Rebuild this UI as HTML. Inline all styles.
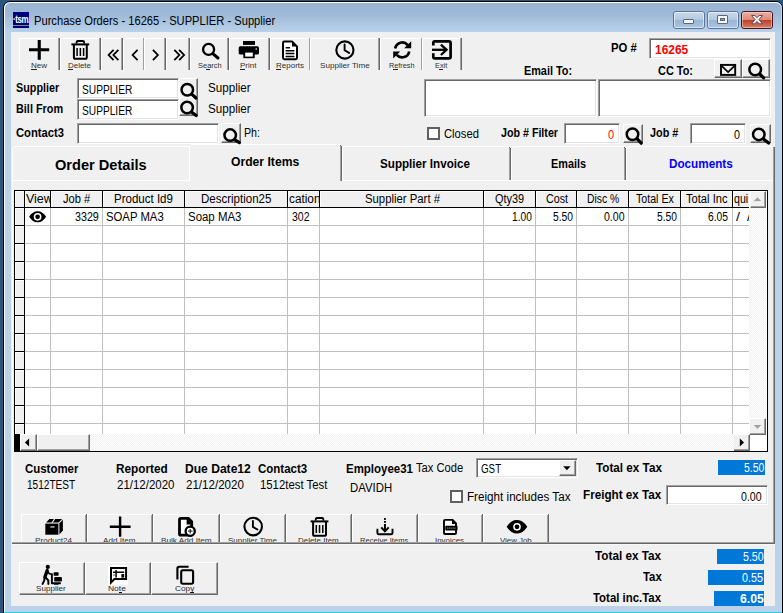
<!DOCTYPE html>
<html>
<head>
<meta charset="utf-8">
<title>Purchase Orders</title>
<style>
*{box-sizing:border-box;margin:0;padding:0}
html,body{width:783px;height:613px;overflow:hidden}
body{background:#2a567d;font-family:"Liberation Sans",sans-serif;font-size:13px;color:#000;position:relative}
.abs,.t,.in,.btn{position:absolute}
.t{white-space:nowrap;line-height:1;color:#000}
#win{position:absolute;left:3px;top:1px;width:780px;height:620px;border:1px solid #000;border-radius:7px 7px 0 0;background:#bad2ea;overflow:hidden}
#win .hl{position:absolute;left:0;top:0;right:0;bottom:0;border:1px solid #fff;border-radius:6px 6px 0 0;border-right-color:#9fe6fb}
#titlegrad{position:absolute;left:1px;top:1px;right:1px;height:30px;background:linear-gradient(#98b3d3 0%,#9fb9d8 40%,#b4cde7 85%,#bad2ea 100%);border-radius:5px 5px 0 0}
#client{position:absolute;left:11px;top:32px;width:764px;height:574px;background:#f0f0f0}
#botcyan{position:absolute;left:4px;top:612px;width:778px;height:1px;background:#22d0e6}
.in{background:#fff;border:1px solid;border-color:#a0a0a0 #fff #fff #a0a0a0;box-shadow:inset 1px 1px 0 #696969,inset -1px -1px 0 #e3e3e3}
.btn{background:#f0f0f0;border:1px solid;border-color:#fff #696969 #696969 #fff;box-shadow:inset -1px -1px 0 #a0a0a0}
.wb{border:1px solid #5a7597;border-radius:3px;background:linear-gradient(#c9d9eb 0%,#b3c8df 48%,#9ab5d4 52%,#a9c5e2 100%)}
.wb i{position:absolute;left:0;top:0;right:0;bottom:0;border:1px solid rgba(255,255,255,.55);border-radius:2px}
.wc{border-color:#47161f;background:linear-gradient(#e9b0a3 0%,#dc8b79 48%,#bf4024 52%,#d4806b 100%)}
.wc i{border-color:rgba(255,220,210,.5)}
.clip{position:absolute;overflow:hidden}
.lbl{color:#5a5a5a}

</style>
</head>
<body>
<div id="win"><div id="titlegrad"></div><div class="hl"></div></div>
<div id="botcyan"></div>
<div id="client"></div>
<div class="abs" id="appicon" style="left:13px;top:12px;width:16px;height:16px;background:#00007b;overflow:hidden">
<span class="t" style="left:-0.5px;top:2px;font-size:10px;font-weight:bold;color:#fff;letter-spacing:-0.5px;transform:scale(0.8,1.15);transform-origin:0 0">&#183;tsm.</span>
<div class="abs" style="left:0;top:13px;width:16px;height:1px;background:#8c8678"></div>
</div>
<span class="t" id="ttl" style="left:33.80px;top:15.00px;font-size:12px;transform:scaleX(0.9296);transform-origin:0 0;">Purchase Orders - 16265 - SUPPLIER - Supplier</span>
<div class="abs wb" style="left:673px;top:11px;width:32px;height:18px"><i></i><div class="abs" style="left:9px;top:7px;width:11px;height:5px;background:#f4f6f9;border:1px solid #5b6676;border-radius:1px"></div></div>
<div class="abs wb" style="left:707px;top:11px;width:32px;height:18px"><i></i><div class="abs" style="left:9px;top:3px;width:11px;height:9px;background:#f4f6f9;border:1px solid #5b6676;border-radius:1px"><div class="abs" style="left:2px;top:2px;width:5px;height:3px;background:#7f9cc2;border:1px solid #5b6676"></div></div></div>
<div class="abs wb wc" style="left:741px;top:11px;width:32px;height:18px"><i></i>
<svg class="abs" style="left:7.7px;top:1.8px" width="14" height="12" viewBox="0 0 14 12"><path d="M1.5 1.5h3.4L7 3.7 9.1 1.5H12.5L8.9 5.6 12.5 9.8H9.1L7 7.5 4.9 9.8H1.5L5.1 5.6Z" fill="#f6f2f1" stroke="#5d4a52" stroke-width="1" stroke-linejoin="round"/></svg></div>
<div class="abs" style="left:19px;top:38px;width:1px;height:32px;background:#fff;"></div>
<div class="abs" style="left:19px;top:38px;width:41px;height:1px;background:#fff;"></div>
<div class="abs" style="left:58px;top:38px;width:1px;height:32px;background:#a0a0a0;"></div>
<div class="abs" style="left:59px;top:38px;width:1px;height:32px;background:#696969;"></div>
<div class="abs" style="left:60px;top:38px;width:1px;height:32px;background:#fff;"></div>
<div class="abs" style="left:60px;top:38px;width:41px;height:1px;background:#fff;"></div>
<div class="abs" style="left:99px;top:38px;width:1px;height:32px;background:#a0a0a0;"></div>
<div class="abs" style="left:100px;top:38px;width:1px;height:32px;background:#696969;"></div>
<div class="abs" style="left:101px;top:38px;width:1px;height:32px;background:#fff;"></div>
<div class="abs" style="left:101px;top:38px;width:22px;height:1px;background:#fff;"></div>
<div class="abs" style="left:121px;top:38px;width:1px;height:32px;background:#a0a0a0;"></div>
<div class="abs" style="left:122px;top:38px;width:1px;height:32px;background:#696969;"></div>
<div class="abs" style="left:123px;top:38px;width:1px;height:32px;background:#fff;"></div>
<div class="abs" style="left:123px;top:38px;width:21px;height:1px;background:#fff;"></div>
<div class="abs" style="left:143px;top:38px;width:1px;height:32px;background:#a0a0a0;"></div>
<div class="abs" style="left:144px;top:38px;width:1px;height:32px;background:#fff;"></div>
<div class="abs" style="left:144px;top:38px;width:22px;height:1px;background:#fff;"></div>
<div class="abs" style="left:164px;top:38px;width:1px;height:32px;background:#a0a0a0;"></div>
<div class="abs" style="left:165px;top:38px;width:1px;height:32px;background:#696969;"></div>
<div class="abs" style="left:166px;top:38px;width:1px;height:32px;background:#fff;"></div>
<div class="abs" style="left:166px;top:38px;width:24px;height:1px;background:#fff;"></div>
<div class="abs" style="left:188px;top:38px;width:1px;height:32px;background:#a0a0a0;"></div>
<div class="abs" style="left:189px;top:38px;width:1px;height:32px;background:#696969;"></div>
<div class="abs" style="left:190px;top:38px;width:1px;height:32px;background:#fff;"></div>
<div class="abs" style="left:190px;top:38px;width:39px;height:1px;background:#fff;"></div>
<div class="abs" style="left:227px;top:38px;width:1px;height:32px;background:#a0a0a0;"></div>
<div class="abs" style="left:228px;top:38px;width:1px;height:32px;background:#696969;"></div>
<div class="abs" style="left:229px;top:38px;width:1px;height:32px;background:#fff;"></div>
<div class="abs" style="left:229px;top:38px;width:41px;height:1px;background:#fff;"></div>
<div class="abs" style="left:268px;top:38px;width:1px;height:32px;background:#a0a0a0;"></div>
<div class="abs" style="left:269px;top:38px;width:1px;height:32px;background:#696969;"></div>
<div class="abs" style="left:270px;top:38px;width:1px;height:32px;background:#fff;"></div>
<div class="abs" style="left:270px;top:38px;width:40px;height:1px;background:#fff;"></div>
<div class="abs" style="left:309px;top:38px;width:1px;height:32px;background:#a0a0a0;"></div>
<div class="abs" style="left:310px;top:38px;width:1px;height:32px;background:#fff;"></div>
<div class="abs" style="left:310px;top:38px;width:70px;height:1px;background:#fff;"></div>
<div class="abs" style="left:378px;top:38px;width:1px;height:32px;background:#a0a0a0;"></div>
<div class="abs" style="left:379px;top:38px;width:1px;height:32px;background:#696969;"></div>
<div class="abs" style="left:380px;top:38px;width:1px;height:32px;background:#fff;"></div>
<div class="abs" style="left:380px;top:38px;width:42px;height:1px;background:#fff;"></div>
<div class="abs" style="left:421px;top:38px;width:1px;height:32px;background:#a0a0a0;"></div>
<div class="abs" style="left:422px;top:38px;width:1px;height:32px;background:#fff;"></div>
<div class="abs" style="left:422px;top:38px;width:40px;height:1px;background:#fff;"></div>
<div class="abs" style="left:460px;top:38px;width:1px;height:32px;background:#a0a0a0;"></div>
<div class="abs" style="left:461px;top:38px;width:1px;height:32px;background:#696969;"></div>
<span class="t" id="lNew" style="left:31.00px;top:62.00px;font-size:8px;color:#303030;transform:scaleX(1.0053);transform-origin:0 0;">New</span>
<div class="abs" style="left:31px;top:69px;width:5.600000000000001px;height:1px;background:#222;"></div>
<span class="t" id="lDel" style="left:68.00px;top:62.00px;font-size:8px;color:#303030;transform:scaleX(0.9946);transform-origin:0 0;">Delete</span>
<div class="abs" style="left:68px;top:69px;width:5.400000000000006px;height:1px;background:#222;"></div>
<span class="t" id="lSea" style="left:197.70px;top:62.00px;font-size:8px;color:#303030;transform:scaleX(0.9346);transform-origin:0 0;">Search</span>
<div class="abs" style="left:206px;top:69px;width:4.400000000000006px;height:1px;background:#222;"></div>
<span class="t" id="lPri" style="left:240.30px;top:62.00px;font-size:8px;color:#303030;transform:scaleX(0.9968);transform-origin:0 0;">Print</span>
<div class="abs" style="left:240.3px;top:69px;width:4.299999999999983px;height:1px;background:#222;"></div>
<span class="t" id="lRep" style="left:276.10px;top:62.00px;font-size:8px;color:#303030;transform:scaleX(1.0030);transform-origin:0 0;">Reports</span>
<div class="abs" style="left:276.1px;top:69px;width:4.699999999999989px;height:1px;background:#222;"></div>
<span class="t" id="lSTi" style="left:319.70px;top:62.00px;font-size:8px;color:#303030;transform:scaleX(1.0159);transform-origin:0 0;">Supplier Time</span>
<span class="t" id="lRef" style="left:388.60px;top:62.00px;font-size:8px;color:#303030;transform:scaleX(0.9102);transform-origin:0 0;">Refresh</span>
<div class="abs" style="left:393.2px;top:69px;width:4.400000000000034px;height:1px;background:#222;"></div>
<span class="t" id="lExi" style="left:435.00px;top:62.00px;font-size:8px;color:#303030;transform:scaleX(0.9143);transform-origin:0 0;">Exit</span>
<div class="abs" style="left:439.3px;top:69px;width:3.8999999999999773px;height:1px;background:#222;"></div>
<span class="t" id="fSup" style="left:15.80px;top:82.00px;font-size:12px;font-weight:bold;transform:scaleX(0.8997);transform-origin:0 0;">Supplier</span>
<span class="t" id="fBil" style="left:15.80px;top:103.00px;font-size:12px;font-weight:bold;transform:scaleX(0.9055);transform-origin:0 0;">Bill From</span>
<span class="t" id="fCon" style="left:16.00px;top:127.00px;font-size:12px;font-weight:bold;transform:scaleX(0.9349);transform-origin:0 0;">Contact3</span>
<div class="in" style="left:77px;top:78px;width:102px;height:21px;"></div>
<div class="in" style="left:77px;top:99px;width:102px;height:21px;"></div>
<div class="in" style="left:77px;top:123px;width:142px;height:21px;"></div>
<span class="t" id="fSv1" style="left:82.00px;top:84.00px;font-size:12px;transform:scaleX(0.8474);transform-origin:0 0;">SUPPLIER</span>
<span class="t" id="fSv2" style="left:82.00px;top:105.00px;font-size:12px;transform:scaleX(0.8474);transform-origin:0 0;">SUPPLIER</span>
<div class="btn" style="left:179px;top:78px;width:19px;height:23px;"></div>
<div class="btn" style="left:179px;top:97px;width:19px;height:19px;"></div>
<div class="btn" style="left:221px;top:123px;width:20px;height:20px;"></div>
<span class="t" id="fSn1" style="left:207.50px;top:82.00px;font-size:12px;transform:scaleX(0.9698);transform-origin:0 0;">Supplier</span>
<span class="t" id="fSn2" style="left:207.50px;top:103.00px;font-size:12px;transform:scaleX(0.9698);transform-origin:0 0;">Supplier</span>
<span class="t" id="fPh" style="left:244.30px;top:127.00px;font-size:12px;transform:scaleX(0.8881);transform-origin:0 0;">Ph:</span>
<span class="t" id="fPO" style="left:611.20px;top:42.00px;font-size:12px;font-weight:bold;transform:scaleX(0.9430);transform-origin:0 0;">PO #</span>
<div class="in" style="left:649px;top:38px;width:122px;height:21px;"></div>
<span class="t" id="fPOv" style="left:654.90px;top:44.00px;font-size:12px;font-weight:bold;color:#f00;transform:scaleX(0.9948);transform-origin:0 0;">16265</span>
<span class="t" id="fEm" style="left:524.00px;top:65.00px;font-size:12px;font-weight:bold;transform:scaleX(0.9035);transform-origin:0 0;">Email To:</span>
<span class="t" id="fCC" style="left:658.00px;top:65.00px;font-size:12px;font-weight:bold;transform:scaleX(0.9106);transform-origin:0 0;">CC To:</span>
<div class="btn" style="left:714px;top:59px;width:28px;height:19px;"></div>
<div class="btn" style="left:742px;top:59px;width:28px;height:19px;"></div>
<div class="in" style="left:424px;top:79px;width:173px;height:38px;"></div>
<div class="in" style="left:598px;top:79px;width:173px;height:38px;"></div>
<div class="abs" style="left:427px;top:127px;width:13px;height:13px;background:#fff;border:2px solid #606060"></div>
<span class="t" id="fClo" style="left:444.00px;top:128.00px;font-size:12px;transform:scaleX(0.9368);transform-origin:0 0;">Closed</span>
<span class="t" id="fJF" style="left:501.00px;top:127.00px;font-size:12px;font-weight:bold;transform:scaleX(0.8904);transform-origin:0 0;">Job # Filter</span>
<div class="in" style="left:564px;top:123px;width:56px;height:21px;"></div>
<span class="t" id="fJFv" style="left:608.00px;top:129.00px;font-size:12px;color:#f00;transform:scaleX(0.9271);transform-origin:0 0;">0</span>
<div class="btn" style="left:623px;top:124px;width:20px;height:19px;"></div>
<span class="t" id="fJn" style="left:649.70px;top:127.00px;font-size:12px;font-weight:bold;transform:scaleX(0.9029);transform-origin:0 0;">Job #</span>
<div class="in" style="left:690px;top:123px;width:56px;height:21px;"></div>
<span class="t" id="fJnv" style="left:734.00px;top:129.00px;font-size:12px;transform:scaleX(0.8972);transform-origin:0 0;">0</span>
<div class="btn" style="left:750px;top:124px;width:21px;height:19px;"></div>
<div class="abs" style="left:12px;top:181px;width:1px;height:361px;background:#fff;"></div>
<div class="abs" style="left:12px;top:542px;width:763px;height:1px;background:#a0a0a0;"></div>
<div class="abs" style="left:12px;top:543px;width:763px;height:1px;background:#696969;"></div>
<div class="abs" style="left:12px;top:544px;width:763px;height:1px;background:#f8f8f8;"></div>
<div class="abs" style="left:773px;top:147px;width:1px;height:396px;background:#a0a0a0;"></div>
<div class="abs" style="left:774px;top:147px;width:1px;height:397px;background:#696969;"></div>
<div class="abs" style="left:12px;top:180px;width:178px;height:1px;background:#fff;"></div>
<div class="abs" style="left:342px;top:180px;width:431px;height:1px;background:#fff;"></div>
<div class="abs" style="left:12px;top:148px;width:1px;height:32px;background:#fff;"></div>
<div class="abs" style="left:13px;top:147px;width:1px;height:1px;background:#fff;"></div>
<div class="abs" style="left:14px;top:146px;width:175px;height:1px;background:#fff;"></div>
<div class="abs" style="left:189px;top:146px;width:1px;height:35px;background:#fff;"></div>
<div class="abs" style="left:190px;top:145px;width:1px;height:1px;background:#fff;"></div>
<div class="abs" style="left:191px;top:144px;width:149px;height:1px;background:#fff;"></div>
<div class="abs" style="left:340px;top:146px;width:1px;height:35px;background:#a0a0a0;"></div>
<div class="abs" style="left:341px;top:146px;width:1px;height:35px;background:#696969;"></div>
<div class="abs" style="left:340px;top:145px;width:1px;height:1px;background:#696969;"></div>
<div class="abs" style="left:342px;top:148px;width:1px;height:32px;background:#fff;"></div>
<div class="abs" style="left:343px;top:147px;width:1px;height:1px;background:#fff;"></div>
<div class="abs" style="left:344px;top:146px;width:165px;height:1px;background:#fff;"></div>
<div class="abs" style="left:509px;top:148px;width:1px;height:32px;background:#a0a0a0;"></div>
<div class="abs" style="left:510px;top:148px;width:1px;height:32px;background:#696969;"></div>
<div class="abs" style="left:509px;top:147px;width:1px;height:1px;background:#696969;"></div>
<div class="abs" style="left:511px;top:148px;width:1px;height:32px;background:#fff;"></div>
<div class="abs" style="left:512px;top:147px;width:1px;height:1px;background:#fff;"></div>
<div class="abs" style="left:513px;top:146px;width:111px;height:1px;background:#fff;"></div>
<div class="abs" style="left:624px;top:148px;width:1px;height:32px;background:#a0a0a0;"></div>
<div class="abs" style="left:625px;top:148px;width:1px;height:32px;background:#696969;"></div>
<div class="abs" style="left:624px;top:147px;width:1px;height:1px;background:#696969;"></div>
<div class="abs" style="left:626px;top:148px;width:1px;height:32px;background:#fff;"></div>
<div class="abs" style="left:627px;top:147px;width:1px;height:1px;background:#fff;"></div>
<div class="abs" style="left:628px;top:146px;width:145px;height:1px;background:#fff;"></div>
<span class="t" id="tbOD" style="left:55.30px;top:157.00px;font-size:15px;font-weight:bold;transform:scaleX(0.9733);transform-origin:0 0;">Order Details</span>
<span class="t" id="tbOI" style="left:231.00px;top:156.00px;font-size:12.5px;font-weight:bold;transform:scaleX(0.9719);transform-origin:0 0;">Order Items</span>
<span class="t" id="tbSI" style="left:380.00px;top:158.00px;font-size:12.5px;font-weight:bold;transform:scaleX(0.9320);transform-origin:0 0;">Supplier Invoice</span>
<span class="t" id="tbEm" style="left:551.00px;top:158.00px;font-size:12.5px;font-weight:bold;transform:scaleX(0.8682);transform-origin:0 0;">Emails</span>
<span class="t" id="tbDo" style="left:668.50px;top:158.00px;font-size:12.5px;font-weight:bold;color:#0000ff;transform:scaleX(0.9357);transform-origin:0 0;">Documents</span>
<div class="abs" style="left:14px;top:190px;width:754px;height:262px;background:#fff;"></div>
<div class="abs" style="left:15px;top:191px;width:734px;height:16px;background:#f0f0f0;"></div>
<div class="abs" style="left:15px;top:208px;width:9px;height:226px;background:#f0f0f0;"></div>
<div class="abs" style="left:14px;top:190px;width:754px;height:1px;background:#000;"></div>
<div class="abs" style="left:14px;top:451px;width:754px;height:1px;background:#000;"></div>
<div class="abs" style="left:14px;top:190px;width:1px;height:262px;background:#000;"></div>
<div class="abs" style="left:767px;top:190px;width:1px;height:262px;background:#000;"></div>
<div class="abs" style="left:15px;top:207px;width:734px;height:1px;background:#000;"></div>
<div class="abs" style="left:24px;top:191px;width:1px;height:16px;background:#000;"></div>
<div class="abs" style="left:50px;top:191px;width:1px;height:16px;background:#000;"></div>
<div class="abs" style="left:50px;top:208px;width:1px;height:226px;background:#c0c0c0;"></div>
<div class="abs" style="left:102px;top:191px;width:1px;height:16px;background:#000;"></div>
<div class="abs" style="left:102px;top:208px;width:1px;height:226px;background:#c0c0c0;"></div>
<div class="abs" style="left:184px;top:191px;width:1px;height:16px;background:#000;"></div>
<div class="abs" style="left:184px;top:208px;width:1px;height:226px;background:#c0c0c0;"></div>
<div class="abs" style="left:287px;top:191px;width:1px;height:16px;background:#000;"></div>
<div class="abs" style="left:287px;top:208px;width:1px;height:226px;background:#c0c0c0;"></div>
<div class="abs" style="left:319px;top:191px;width:1px;height:16px;background:#000;"></div>
<div class="abs" style="left:319px;top:208px;width:1px;height:226px;background:#c0c0c0;"></div>
<div class="abs" style="left:483px;top:191px;width:1px;height:16px;background:#000;"></div>
<div class="abs" style="left:483px;top:208px;width:1px;height:226px;background:#c0c0c0;"></div>
<div class="abs" style="left:535px;top:191px;width:1px;height:16px;background:#000;"></div>
<div class="abs" style="left:535px;top:208px;width:1px;height:226px;background:#c0c0c0;"></div>
<div class="abs" style="left:576px;top:191px;width:1px;height:16px;background:#000;"></div>
<div class="abs" style="left:576px;top:208px;width:1px;height:226px;background:#c0c0c0;"></div>
<div class="abs" style="left:628px;top:191px;width:1px;height:16px;background:#000;"></div>
<div class="abs" style="left:628px;top:208px;width:1px;height:226px;background:#c0c0c0;"></div>
<div class="abs" style="left:680px;top:191px;width:1px;height:16px;background:#000;"></div>
<div class="abs" style="left:680px;top:208px;width:1px;height:226px;background:#c0c0c0;"></div>
<div class="abs" style="left:732px;top:191px;width:1px;height:16px;background:#000;"></div>
<div class="abs" style="left:732px;top:208px;width:1px;height:226px;background:#c0c0c0;"></div>
<div class="abs" style="left:24px;top:208px;width:1px;height:226px;background:#000;"></div>
<div class="abs" style="left:15px;top:191px;width:9px;height:1px;background:#fff;"></div>
<div class="abs" style="left:15px;top:191px;width:1px;height:16px;background:#fff;"></div>
<div class="abs" style="left:25px;top:191px;width:25px;height:1px;background:#fff;"></div>
<div class="abs" style="left:25px;top:191px;width:1px;height:16px;background:#fff;"></div>
<div class="abs" style="left:51px;top:191px;width:51px;height:1px;background:#fff;"></div>
<div class="abs" style="left:51px;top:191px;width:1px;height:16px;background:#fff;"></div>
<div class="abs" style="left:103px;top:191px;width:81px;height:1px;background:#fff;"></div>
<div class="abs" style="left:103px;top:191px;width:1px;height:16px;background:#fff;"></div>
<div class="abs" style="left:185px;top:191px;width:102px;height:1px;background:#fff;"></div>
<div class="abs" style="left:185px;top:191px;width:1px;height:16px;background:#fff;"></div>
<div class="abs" style="left:288px;top:191px;width:31px;height:1px;background:#fff;"></div>
<div class="abs" style="left:288px;top:191px;width:1px;height:16px;background:#fff;"></div>
<div class="abs" style="left:320px;top:191px;width:163px;height:1px;background:#fff;"></div>
<div class="abs" style="left:320px;top:191px;width:1px;height:16px;background:#fff;"></div>
<div class="abs" style="left:484px;top:191px;width:51px;height:1px;background:#fff;"></div>
<div class="abs" style="left:484px;top:191px;width:1px;height:16px;background:#fff;"></div>
<div class="abs" style="left:536px;top:191px;width:40px;height:1px;background:#fff;"></div>
<div class="abs" style="left:536px;top:191px;width:1px;height:16px;background:#fff;"></div>
<div class="abs" style="left:577px;top:191px;width:51px;height:1px;background:#fff;"></div>
<div class="abs" style="left:577px;top:191px;width:1px;height:16px;background:#fff;"></div>
<div class="abs" style="left:629px;top:191px;width:51px;height:1px;background:#fff;"></div>
<div class="abs" style="left:629px;top:191px;width:1px;height:16px;background:#fff;"></div>
<div class="abs" style="left:681px;top:191px;width:51px;height:1px;background:#fff;"></div>
<div class="abs" style="left:681px;top:191px;width:1px;height:16px;background:#fff;"></div>
<div class="abs" style="left:733px;top:191px;width:16px;height:1px;background:#fff;"></div>
<div class="abs" style="left:733px;top:191px;width:1px;height:16px;background:#fff;"></div>
<div class="abs" style="left:25px;top:225px;width:724px;height:1px;background:#c0c0c0;"></div>
<div class="abs" style="left:15px;top:225px;width:9px;height:1px;background:#000;"></div>
<div class="abs" style="left:25px;top:243px;width:724px;height:1px;background:#c0c0c0;"></div>
<div class="abs" style="left:15px;top:243px;width:9px;height:1px;background:#000;"></div>
<div class="abs" style="left:25px;top:261px;width:724px;height:1px;background:#c0c0c0;"></div>
<div class="abs" style="left:15px;top:261px;width:9px;height:1px;background:#000;"></div>
<div class="abs" style="left:25px;top:279px;width:724px;height:1px;background:#c0c0c0;"></div>
<div class="abs" style="left:15px;top:279px;width:9px;height:1px;background:#000;"></div>
<div class="abs" style="left:25px;top:297px;width:724px;height:1px;background:#c0c0c0;"></div>
<div class="abs" style="left:15px;top:297px;width:9px;height:1px;background:#000;"></div>
<div class="abs" style="left:25px;top:315px;width:724px;height:1px;background:#c0c0c0;"></div>
<div class="abs" style="left:15px;top:315px;width:9px;height:1px;background:#000;"></div>
<div class="abs" style="left:25px;top:333px;width:724px;height:1px;background:#c0c0c0;"></div>
<div class="abs" style="left:15px;top:333px;width:9px;height:1px;background:#000;"></div>
<div class="abs" style="left:25px;top:351px;width:724px;height:1px;background:#c0c0c0;"></div>
<div class="abs" style="left:15px;top:351px;width:9px;height:1px;background:#000;"></div>
<div class="abs" style="left:25px;top:369px;width:724px;height:1px;background:#c0c0c0;"></div>
<div class="abs" style="left:15px;top:369px;width:9px;height:1px;background:#000;"></div>
<div class="abs" style="left:25px;top:387px;width:724px;height:1px;background:#c0c0c0;"></div>
<div class="abs" style="left:15px;top:387px;width:9px;height:1px;background:#000;"></div>
<div class="abs" style="left:25px;top:405px;width:724px;height:1px;background:#c0c0c0;"></div>
<div class="abs" style="left:15px;top:405px;width:9px;height:1px;background:#000;"></div>
<div class="abs" style="left:25px;top:423px;width:724px;height:1px;background:#c0c0c0;"></div>
<div class="abs" style="left:15px;top:423px;width:9px;height:1px;background:#000;"></div>
<div class="abs" style="left:15px;top:208px;width:9px;height:1px;background:#fff;"></div>
<div class="abs" style="left:15px;top:208px;width:1px;height:17px;background:#fff;"></div>
<div class="abs" style="left:15px;top:226px;width:9px;height:1px;background:#fff;"></div>
<div class="abs" style="left:15px;top:226px;width:1px;height:17px;background:#fff;"></div>
<div class="abs" style="left:15px;top:244px;width:9px;height:1px;background:#fff;"></div>
<div class="abs" style="left:15px;top:244px;width:1px;height:17px;background:#fff;"></div>
<div class="abs" style="left:15px;top:262px;width:9px;height:1px;background:#fff;"></div>
<div class="abs" style="left:15px;top:262px;width:1px;height:17px;background:#fff;"></div>
<div class="abs" style="left:15px;top:280px;width:9px;height:1px;background:#fff;"></div>
<div class="abs" style="left:15px;top:280px;width:1px;height:17px;background:#fff;"></div>
<div class="abs" style="left:15px;top:298px;width:9px;height:1px;background:#fff;"></div>
<div class="abs" style="left:15px;top:298px;width:1px;height:17px;background:#fff;"></div>
<div class="abs" style="left:15px;top:316px;width:9px;height:1px;background:#fff;"></div>
<div class="abs" style="left:15px;top:316px;width:1px;height:17px;background:#fff;"></div>
<div class="abs" style="left:15px;top:334px;width:9px;height:1px;background:#fff;"></div>
<div class="abs" style="left:15px;top:334px;width:1px;height:17px;background:#fff;"></div>
<div class="abs" style="left:15px;top:352px;width:9px;height:1px;background:#fff;"></div>
<div class="abs" style="left:15px;top:352px;width:1px;height:17px;background:#fff;"></div>
<div class="abs" style="left:15px;top:370px;width:9px;height:1px;background:#fff;"></div>
<div class="abs" style="left:15px;top:370px;width:1px;height:17px;background:#fff;"></div>
<div class="abs" style="left:15px;top:388px;width:9px;height:1px;background:#fff;"></div>
<div class="abs" style="left:15px;top:388px;width:1px;height:17px;background:#fff;"></div>
<div class="abs" style="left:15px;top:406px;width:9px;height:1px;background:#fff;"></div>
<div class="abs" style="left:15px;top:406px;width:1px;height:17px;background:#fff;"></div>
<div class="abs" style="left:15px;top:424px;width:9px;height:1px;background:#fff;"></div>
<div class="abs" style="left:15px;top:424px;width:1px;height:10px;background:#fff;"></div>
<svg width="0" height="0" style="position:absolute"><defs><pattern id="dth" width="2" height="2" patternUnits="userSpaceOnUse"><rect width="2" height="2" fill="#f0f0f0"/><rect width="1" height="1" fill="#fff"/><rect x="1" y="1" width="1" height="1" fill="#fff"/></pattern></defs></svg>
<div class="btn" style="left:750px;top:191px;width:16px;height:17px;"></div>
<div class="btn" style="left:749px;top:418px;width:17px;height:17px;"></div>
<div class="abs" style="left:15px;top:434px;width:5px;height:17px;background:#000;"></div>
<div class="btn" style="left:20px;top:434px;width:17px;height:17px;"></div>
<div class="btn" style="left:37px;top:434px;width:53px;height:17px;"></div>
<div class="btn" style="left:733px;top:434px;width:17px;height:17px;"></div>
<div class="abs" style="left:750px;top:435px;width:17px;height:16px;background:#fff;"></div>
<div class="clip" style="left:25px;top:191px;width:25px;height:16px"><span class="t" id="hView" style="left:1.20px;top:2.00px;font-size:12px;transform:scaleX(1.0389);transform-origin:0 0;">View</span></div>
<span class="t" id="hJob" style="left:63.30px;top:193.00px;font-size:12px;transform:scaleX(0.9265);transform-origin:0 0;">Job #</span>
<span class="t" id="hPid" style="left:114.30px;top:193.00px;font-size:12px;transform:scaleX(0.9597);transform-origin:0 0;">Product Id9</span>
<span class="t" id="hDes" style="left:201.30px;top:193.00px;font-size:12px;transform:scaleX(0.9595);transform-origin:0 0;">Description25</span>
<div class="clip" style="left:288px;top:191px;width:31px;height:16px"><span class="t" id="hLoc" style="left:1.00px;top:2.00px;font-size:12px;transform:scaleX(0.9834);transform-origin:0 0;">cation</span></div>
<span class="t" id="hSPn" style="left:364.50px;top:193.00px;font-size:12px;transform:scaleX(0.9447);transform-origin:0 0;">Supplier Part #</span>
<span class="t" id="hQty" style="left:494.90px;top:193.00px;font-size:12px;transform:scaleX(0.9121);transform-origin:0 0;">Qty39</span>
<span class="t" id="hCos" style="left:545.60px;top:193.00px;font-size:12px;transform:scaleX(0.8952);transform-origin:0 0;">Cost</span>
<span class="t" id="hDis" style="left:586.50px;top:193.00px;font-size:12px;transform:scaleX(0.8649);transform-origin:0 0;">Disc %</span>
<span class="t" id="hTEx" style="left:636.30px;top:193.00px;font-size:12px;transform:scaleX(0.8855);transform-origin:0 0;">Total Ex</span>
<span class="t" id="hTIn" style="left:686.40px;top:193.00px;font-size:12px;transform:scaleX(0.9283);transform-origin:0 0;">Total Inc</span>
<span class="t" id="hqui" style="left:733.80px;top:193.00px;font-size:12px;transform:scaleX(0.8866);transform-origin:0 0;">qui</span>
<span class="t" id="r3329" style="left:75.10px;top:211.00px;font-size:12px;transform:scaleX(0.8913);transform-origin:0 0;">3329</span>
<span class="t" id="rSoap1" style="left:106.30px;top:211.00px;font-size:12px;transform:scaleX(0.9437);transform-origin:0 0;">SOAP MA3</span>
<span class="t" id="rSoap2" style="left:188.40px;top:211.00px;font-size:12px;transform:scaleX(0.9528);transform-origin:0 0;">Soap MA3</span>
<span class="t" id="r302" style="left:291.50px;top:211.00px;font-size:12px;transform:scaleX(0.8736);transform-origin:0 0;">302</span>
<span class="t" id="r100" style="left:511.90px;top:211.00px;font-size:12px;transform:scaleX(0.8476);transform-origin:0 0;">1.00</span>
<span class="t" id="r550" style="left:552.80px;top:211.00px;font-size:12px;transform:scaleX(0.8562);transform-origin:0 0;">5.50</span>
<span class="t" id="r000" style="left:604.20px;top:211.00px;font-size:12px;transform:scaleX(0.8776);transform-origin:0 0;">0.00</span>
<span class="t" id="r550b" style="left:656.80px;top:211.00px;font-size:12px;transform:scaleX(0.8562);transform-origin:0 0;">5.50</span>
<span class="t" id="r605" style="left:708.30px;top:211.00px;font-size:12px;transform:scaleX(0.8562);transform-origin:0 0;">6.05</span>
<span class="t" id="rsl1" style="left:736.30px;top:211.00px;font-size:12px;transform:scaleX(1.1963);transform-origin:0 0;">/</span>
<div class="clip" style="left:733px;top:208px;width:16px;height:17px"><span class="t" id="rsl2" style="left:14.00px;top:3.00px;font-size:12px;transform:scaleX(1.1963);transform-origin:0 0;">/</span></div>
<span class="t" id="bCus" style="left:25.20px;top:463.00px;font-size:12px;font-weight:bold;transform:scaleX(0.9533);transform-origin:0 0;">Customer</span>
<span class="t" id="bCusv" style="left:26.90px;top:479.00px;font-size:12px;transform:scaleX(0.8401);transform-origin:0 0;">1512TEST</span>
<span class="t" id="bRep" style="left:116.00px;top:463.00px;font-size:12px;font-weight:bold;transform:scaleX(0.9796);transform-origin:0 0;">Reported</span>
<span class="t" id="bRepv" style="left:116.60px;top:479.00px;font-size:12px;transform:scaleX(0.9573);transform-origin:0 0;">21/12/2020</span>
<span class="t" id="bDue" style="left:185.40px;top:463.00px;font-size:12px;font-weight:bold;transform:scaleX(1.0065);transform-origin:0 0;">Due Date12</span>
<span class="t" id="bDuev" style="left:186.10px;top:479.00px;font-size:12px;transform:scaleX(0.9640);transform-origin:0 0;">21/12/2020</span>
<span class="t" id="bCon" style="left:258.20px;top:463.00px;font-size:12px;font-weight:bold;transform:scaleX(0.9582);transform-origin:0 0;">Contact3</span>
<span class="t" id="bConv" style="left:259.90px;top:479.00px;font-size:12px;transform:scaleX(0.9456);transform-origin:0 0;">1512test Test</span>
<span class="t" id="bEmp" style="left:346.40px;top:463.00px;font-size:12px;font-weight:bold;transform:scaleX(0.9565);transform-origin:0 0;">Employee31</span>
<span class="t" id="bEmpv" style="left:349.60px;top:482.00px;font-size:12px;transform:scaleX(0.9471);transform-origin:0 0;">DAVIDH</span>
<span class="t" id="bTax" style="left:415.70px;top:462.00px;font-size:12px;transform:scaleX(0.9329);transform-origin:0 0;">Tax Code</span>
<div class="in" style="left:476px;top:458px;width:102px;height:20px;"></div>
<span class="t" id="bGST" style="left:481.20px;top:463.00px;font-size:12px;transform:scaleX(0.8147);transform-origin:0 0;">GST</span>
<div class="btn" style="left:559px;top:460px;width:17px;height:16px;"></div>
<div class="abs" style="left:450px;top:490px;width:13px;height:13px;background:#fff;border:2px solid #606060"></div>
<span class="t" id="bFrI" style="left:466.80px;top:491.00px;font-size:12px;transform:scaleX(0.9718);transform-origin:0 0;">Freight includes Tax</span>
<span class="t" id="bTe1" style="left:596.10px;top:462.00px;font-size:12px;font-weight:bold;transform:scaleX(0.9752);transform-origin:0 0;">Total ex Tax</span>
<div class="abs" style="left:718px;top:460px;width:47px;height:15px;background:#0078d7;"></div>
<span class="t" id="bTe1v" style="left:744.00px;top:462.00px;font-size:12px;color:#fff;transform:scaleX(0.8647);transform-origin:0 0;">5.50</span>
<span class="t" id="bFrE" style="left:583.40px;top:489.00px;font-size:12px;font-weight:bold;transform:scaleX(0.9730);transform-origin:0 0;">Freight ex Tax</span>
<div class="in" style="left:666px;top:485px;width:102px;height:20px;"></div>
<span class="t" id="bFrEv" style="left:741.20px;top:491.00px;font-size:12px;transform:scaleX(0.8862);transform-origin:0 0;">0.00</span>
<div class="abs" style="left:21px;top:515px;width:1px;height:27px;background:#fff;"></div>
<div class="abs" style="left:21px;top:514px;width:65px;height:1px;background:#fff;"></div>
<div class="abs" style="left:85px;top:515px;width:1px;height:27px;background:#a0a0a0;"></div>
<div class="abs" style="left:86px;top:514px;width:1px;height:28px;background:#696969;"></div>
<div class="abs" style="left:87px;top:515px;width:1px;height:27px;background:#fff;"></div>
<div class="abs" style="left:87px;top:514px;width:65px;height:1px;background:#fff;"></div>
<div class="abs" style="left:151px;top:515px;width:1px;height:27px;background:#a0a0a0;"></div>
<div class="abs" style="left:152px;top:514px;width:1px;height:28px;background:#696969;"></div>
<div class="abs" style="left:153px;top:515px;width:1px;height:27px;background:#fff;"></div>
<div class="abs" style="left:153px;top:514px;width:66px;height:1px;background:#fff;"></div>
<div class="abs" style="left:218px;top:515px;width:1px;height:27px;background:#a0a0a0;"></div>
<div class="abs" style="left:219px;top:514px;width:1px;height:28px;background:#696969;"></div>
<div class="abs" style="left:220px;top:515px;width:1px;height:27px;background:#fff;"></div>
<div class="abs" style="left:220px;top:514px;width:65px;height:1px;background:#fff;"></div>
<div class="abs" style="left:284px;top:515px;width:1px;height:27px;background:#a0a0a0;"></div>
<div class="abs" style="left:285px;top:514px;width:1px;height:28px;background:#696969;"></div>
<div class="abs" style="left:286px;top:515px;width:1px;height:27px;background:#fff;"></div>
<div class="abs" style="left:286px;top:514px;width:65px;height:1px;background:#fff;"></div>
<div class="abs" style="left:350px;top:515px;width:1px;height:27px;background:#a0a0a0;"></div>
<div class="abs" style="left:351px;top:514px;width:1px;height:28px;background:#696969;"></div>
<div class="abs" style="left:352px;top:515px;width:1px;height:27px;background:#fff;"></div>
<div class="abs" style="left:352px;top:514px;width:65px;height:1px;background:#fff;"></div>
<div class="abs" style="left:416px;top:515px;width:1px;height:27px;background:#a0a0a0;"></div>
<div class="abs" style="left:417px;top:514px;width:1px;height:28px;background:#696969;"></div>
<div class="abs" style="left:418px;top:515px;width:1px;height:27px;background:#fff;"></div>
<div class="abs" style="left:418px;top:514px;width:64px;height:1px;background:#fff;"></div>
<div class="abs" style="left:481px;top:515px;width:1px;height:27px;background:#a0a0a0;"></div>
<div class="abs" style="left:482px;top:514px;width:1px;height:28px;background:#696969;"></div>
<div class="abs" style="left:483px;top:515px;width:1px;height:27px;background:#fff;"></div>
<div class="abs" style="left:483px;top:514px;width:65px;height:1px;background:#fff;"></div>
<div class="abs" style="left:547px;top:515px;width:1px;height:27px;background:#a0a0a0;"></div>
<div class="abs" style="left:548px;top:514px;width:1px;height:28px;background:#696969;"></div>
<div class="clip" style="left:0;top:0;width:783px;height:542px">
<span class="t" id="kPro" style="left:35.10px;top:537.00px;font-size:8px;color:#303030;transform:scaleX(1.0173);transform-origin:0 0;">Product24</span>
<span class="t" id="kAdd" style="left:103.10px;top:537.00px;font-size:8px;color:#303030;transform:scaleX(1.0183);transform-origin:0 0;">Add Item</span>
<span class="t" id="kBul" style="left:161.10px;top:537.00px;font-size:8px;color:#303030;transform:scaleX(1.0251);transform-origin:0 0;">Bulk Add Item</span>
<span class="t" id="kSup" style="left:228.10px;top:537.00px;font-size:8px;color:#303030;transform:scaleX(0.9996);transform-origin:0 0;">Supplier Time</span>
<span class="t" id="kDel" style="left:297.90px;top:537.00px;font-size:8px;color:#303030;transform:scaleX(0.9950);transform-origin:0 0;">Delete Item</span>
<span class="t" id="kRec" style="left:360.10px;top:537.00px;font-size:8px;color:#303030;transform:scaleX(0.9529);transform-origin:0 0;">Receive Items</span>
<span class="t" id="kInv" style="left:434.70px;top:537.00px;font-size:8px;color:#303030;transform:scaleX(0.9912);transform-origin:0 0;">Invoices</span>
<span class="t" id="kVie" style="left:499.90px;top:537.00px;font-size:8px;color:#303030;transform:scaleX(0.9806);transform-origin:0 0;">View Job</span>
</div>
<div class="btn" style="left:19px;top:562px;width:66px;height:33px;"></div>
<div class="btn" style="left:85px;top:562px;width:66px;height:33px;"></div>
<div class="btn" style="left:151px;top:562px;width:67px;height:33px;"></div>
<div class="abs" style="left:108px;top:565px;width:20px;height:20px;background:#fff;"></div>
<span class="t" id="mSup" style="left:36.10px;top:585.00px;font-size:8px;color:#2a2a2a;transform:scaleX(1.0116);transform-origin:0 0;">Supplier</span>
<span class="t" id="mNot" style="left:108.20px;top:585.00px;font-size:8px;color:#2a2a2a;transform:scaleX(1.0588);transform-origin:0 0;">Note</span>
<div class="abs" style="left:118.9px;top:592px;width:3.0px;height:1px;background:#111;"></div>
<span class="t" id="mCop" style="left:174.70px;top:585.00px;font-size:8px;color:#2a2a2a;transform:scaleX(1.0381);transform-origin:0 0;">Copy</span>
<div class="abs" style="left:190.2px;top:592px;width:4.0px;height:1px;background:#111;"></div>
<span class="t" id="cTe" style="left:595.20px;top:550.00px;font-size:12px;font-weight:bold;transform:scaleX(0.9781);transform-origin:0 0;">Total ex Tax</span>
<div class="abs" style="left:717px;top:549px;width:47px;height:15px;background:#0078d7;"></div>
<span class="t" id="cTev" style="left:742.70px;top:551.00px;font-size:12px;color:#fff;transform:scaleX(0.8819);transform-origin:0 0;">5.50</span>
<span class="t" id="cTa" style="left:642.50px;top:571.00px;font-size:12px;font-weight:bold;transform:scaleX(0.9496);transform-origin:0 0;">Tax</span>
<div class="abs" style="left:708px;top:570px;width:56px;height:15px;background:#0078d7;"></div>
<span class="t" id="cTav" style="left:742.40px;top:572.00px;font-size:12px;color:#fff;transform:scaleX(0.8947);transform-origin:0 0;">0.55</span>
<span class="t" id="cTi" style="left:593.30px;top:592.00px;font-size:12px;font-weight:bold;transform:scaleX(0.9500);transform-origin:0 0;">Total inc.Tax</span>
<div class="abs" style="left:714px;top:591px;width:50px;height:15px;background:#0078d7;"></div>
<span class="t" id="cTiv" style="left:739.50px;top:593.00px;font-size:12px;font-weight:bold;color:#fff;transform:scaleX(1.0189);transform-origin:0 0;">6.05</span>
<svg class="abs" style="left:0;top:0" width="783" height="613" viewBox="0 0 783 613"><path d="M29 49.7H49.2M39.25 40V59.7" stroke="#000" stroke-width="3.1" fill="none"/><g transform="translate(71 40)" fill="none" stroke="#000"><path d="M5.6 3.6V2.2Q5.6 1 6.8 1H11.9Q13.1 1 13.1 2.2V3.6" stroke-width="1.9"/><path d="M0.4 4.4H18.2" stroke-width="2"/><path d="M2.9 5V17.2Q2.9 18.8 4.5 18.8H14.2Q15.8 18.8 15.8 17.2V5" stroke-width="2"/><path d="M6.1 8V16M9.35 8V16M12.6 8V16" stroke-width="1.5"/></g><path d="M113.6 49.8L108.6 55L113.6 60.2" fill="none" stroke="#000" stroke-width="1.8"/><path d="M118.4 49.8L113.4 55L118.4 60.2" fill="none" stroke="#000" stroke-width="1.8"/><path d="M137.6 49.8L132.6 55L137.6 60.2" fill="none" stroke="#000" stroke-width="1.8"/><path d="M152.9 49.8L157.9 55L152.9 60.2" fill="none" stroke="#000" stroke-width="1.8"/><path d="M174.3 49.8L179.3 55L174.3 60.2" fill="none" stroke="#000" stroke-width="1.8"/><path d="M179.1 49.8L184.1 55L179.1 60.2" fill="none" stroke="#000" stroke-width="1.8"/><circle cx="208.6" cy="49.4" r="5.5" fill="none" stroke="#000" stroke-width="2.3"/><path d="M213.02 53.82L218.00 58.00" stroke="#000" stroke-width="3.0" stroke-linecap="round"/><rect x="243" y="41" width="12" height="3.9" fill="#000"/><rect x="238.7" y="46.3" width="20.3" height="8.2" rx="1.6" fill="#000"/><rect x="243.3" y="51.2" width="11.4" height="7" fill="#000"/><rect x="245.2" y="52.6" width="7.6" height="4" fill="#fff"/><circle cx="256.2" cy="49" r="0.8" fill="#fff"/><g transform="translate(282 40.6)"><path d="M1 2.4Q1 1 2.4 1H10.2L15 5.8V17.2Q15 18.6 13.6 18.6H2.4Q1 18.6 1 17.2Z" fill="#fff" stroke="#000" stroke-width="2" stroke-linejoin="round"/><path d="M10 0.6V6H15.6Z" fill="#000"/><path d="M3.6 7.2H8M3.6 10.2H12.4M3.6 13.0H12.4M3.6 15.8H12.4" stroke="#000" stroke-width="1.5"/></g><circle cx="344.9" cy="50" r="8.6" fill="none" stroke="#000" stroke-width="2.1"/><path d="M344.59999999999997 44.4V50.3L349.09999999999997 52.9" fill="none" stroke="#000" stroke-width="1.9" stroke-linecap="round" stroke-linejoin="round"/><g fill="none" stroke="#000" stroke-width="2.7"><path d="M395.2 48.4A7.1 7.1 0 0 1 407.6 45.0"/><path d="M409.2 51.4A7.1 7.1 0 0 1 396.8 54.8"/></g><path d="M411.2 41.2V48.2H404.2Z" fill="#000"/><path d="M393.2 58.6V51.6H400.2Z" fill="#000"/><path d="M433.3 45.6V43Q433.3 41.4 434.9 41.4H449Q450.6 41.4 450.6 43V56.8Q450.6 58.4 449 58.4H434.9Q433.3 58.4 433.3 56.8V53.2" fill="none" stroke="#000" stroke-width="2.7"/><path d="M432 49.8H446" stroke="#000" stroke-width="2.3" fill="none"/><path d="M440.9 44.6L446.6 49.8L440.9 55" stroke="#000" stroke-width="2.3" fill="none"/><circle cx="187.3" cy="89.7" r="5.75" fill="none" stroke="#000" stroke-width="2.5"/><path d="M191.97 94.37L196.00 98.00" stroke="#000" stroke-width="3.2" stroke-linecap="round"/><circle cx="187.1" cy="107.5" r="5.75" fill="none" stroke="#000" stroke-width="2.5"/><path d="M191.77 112.17L196.20 115.60" stroke="#000" stroke-width="3.2" stroke-linecap="round"/><circle cx="230.2" cy="135.1" r="5.75" fill="none" stroke="#000" stroke-width="2.5"/><path d="M234.87 139.77L239.40 142.60" stroke="#000" stroke-width="3.2" stroke-linecap="round"/><rect x="721" y="64.9" width="14.2" height="10" fill="none" stroke="#000" stroke-width="1.9"/><path d="M721.4 65.6L728.1 72L734.8 65.6" fill="none" stroke="#000" stroke-width="1.7"/><circle cx="755.2" cy="69.5" r="5.85" fill="none" stroke="#000" stroke-width="2.5"/><path d="M759.94 74.24L763.60 77.80" stroke="#000" stroke-width="3.2" stroke-linecap="round"/><circle cx="632.5" cy="134.3" r="5.75" fill="none" stroke="#000" stroke-width="2.5"/><path d="M637.17 138.97L641.20 143.20" stroke="#000" stroke-width="3.2" stroke-linecap="round"/><circle cx="758.8" cy="134.4" r="5.75" fill="none" stroke="#000" stroke-width="2.5"/><path d="M763.47 139.07L768.60 143.00" stroke="#000" stroke-width="3.2" stroke-linecap="round"/><rect x="749" y="208" width="17" height="210" fill="url(#dth)"/><rect x="90" y="434" width="644" height="17" fill="url(#dth)"/><path d="M754.5 202L758.4 198L762.3 202Z" fill="#fff"/><path d="M753.7 201.2L757.5 197.2L761.3 201.2Z" fill="#a0a0a0"/><path d="M754.6 425.8L758.5 429.8L762.4 425.8Z" fill="#fff"/><path d="M753.8 425L757.6 429L761.4 425Z" fill="#a0a0a0"/><path d="M29.1 438.6L24.9 442.5L29.1 446.4Z" fill="#000"/><path d="M739.8 438.6L744 442.5L739.8 446.4Z" fill="#000"/><path d="M29.1 216.8Q32.925 211.025 37.6 211.3Q42.275000000000006 211.025 46.1 216.8Q42.275000000000006 222.57500000000002 37.6 222.3Q32.925 222.57500000000002 29.1 216.8Z" fill="#000"/><circle cx="37.6" cy="216.8" r="3.1" fill="none" stroke="#fff" stroke-width="1.5"/><path d="M563.2 466.2H570.6L566.9 470.2Z" fill="#000"/><path d="M45.3 523.6H58.4V534.7H45.3Z" fill="#000"/><path d="M46.1 522.6L49.4 519H53.9L51.6 522.6Z" fill="#000"/><path d="M52.9 522.6L55.2 519H62.1L58.6 522.6Z" fill="#000"/><path d="M59.4 523.3L62.9 519.7V530.6L59.4 534.6Z" fill="#000"/><rect x="50.4" y="526" width="4.1" height="1.8" fill="#9a9a9a"/><path d="M109.8 526.8H130.6M120.1 516.6V536.8" stroke="#000" stroke-width="2.4" fill="none"/><path d="M179.5 519.6Q179.5 518.4 180.7 518.4H188.4L191.7 521.8V534Q191.7 535.2 190.5 535.2H180.7Q179.5 535.2 179.5 534Z" fill="#fff" stroke="#000" stroke-width="2.8" stroke-linejoin="round"/><path d="M186.6 517.4H189L193 521.4V524.4H186.6Z" fill="#000"/><circle cx="190.2" cy="531.2" r="4.6" fill="#fff" stroke="#000" stroke-width="2.3"/><path d="M187.9 531.2H192.5M190.2 528.9V533.5" stroke="#333" stroke-width="1.3"/><circle cx="253.2" cy="526.6" r="8.8" fill="none" stroke="#000" stroke-width="2.1"/><path d="M252.89999999999998 521.0V526.9L257.4 529.5" fill="none" stroke="#000" stroke-width="1.9" stroke-linecap="round" stroke-linejoin="round"/><g transform="translate(310.2 517)" fill="none" stroke="#000"><path d="M5.6 3.6V2.2Q5.6 1 6.8 1H11.9Q13.1 1 13.1 2.2V3.6" stroke-width="1.9"/><path d="M0.4 4.4H18.2" stroke-width="2"/><path d="M2.9 5V17.2Q2.9 18.8 4.5 18.8H14.2Q15.8 18.8 15.8 17.2V5" stroke-width="2"/><path d="M6.1 8V16M9.35 8V16M12.6 8V16" stroke-width="1.5"/></g><rect x="384" y="518.1" width="1.9" height="1.8" fill="#000"/><rect x="384" y="521" width="1.9" height="1.8" fill="#000"/><path d="M384.95 524V531.2" stroke="#000" stroke-width="2" fill="none"/><path d="M381.2 527.4L384.95 531.4L388.7 527.4" stroke="#000" stroke-width="2" fill="none"/><path d="M377.4 528.8V533Q377.4 534.2 378.6 534.2H391.3Q392.5 534.2 392.5 533V528.8" stroke="#000" stroke-width="1.9" fill="none"/><path d="M444 520.9Q444 519.9 445 519.9H452.6L456 523.4V533Q456 534 455 534H445Q444 534 444 533Z" fill="#fff" stroke="#000" stroke-width="1.9" stroke-linejoin="round"/><path d="M452 519.4L456.6 524H452Z" fill="#000"/><rect x="445.3" y="525.7" width="12.2" height="4.8" rx="0.8" fill="#000"/><path d="M447 528.1H455.5" stroke="#aaa" stroke-width="0.9" stroke-dasharray="1.3 0.5"/><path d="M506.7 526.8Q511.335 519.7125 517 520.05Q522.665 519.7125 527.3 526.8Q522.665 533.8874999999999 517 533.55Q511.335 533.8874999999999 506.7 526.8Z" fill="#000"/><circle cx="517" cy="526.8" r="3.1" fill="none" stroke="#fff" stroke-width="1.5"/><circle cx="47.8" cy="566.9" r="2.1" fill="#000"/><path d="M47.2 570.6L44.9 577" stroke="#000" stroke-width="3.4" stroke-linecap="round" fill="none"/><path d="M47.6 571.4L49.2 573.6L51.6 574.2" stroke="#000" stroke-width="1.7" stroke-linecap="round" stroke-linejoin="round" fill="none"/><path d="M45.4 577.2L48.3 580.4L48.4 583.9" stroke="#000" stroke-width="2" stroke-linecap="round" stroke-linejoin="round" fill="none"/><path d="M44.6 577.6L44.2 580.6L42.6 583.9" stroke="#000" stroke-width="2" stroke-linecap="round" stroke-linejoin="round" fill="none"/><path d="M51.9 573.4V583.2H60.8" stroke="#000" stroke-width="1.9" fill="none" stroke-linejoin="round"/><rect x="53.6" y="572.3" width="5" height="3.4" rx="0.7" fill="#000"/><rect x="54.2" y="577.1" width="7.7" height="4.4" rx="0.8" fill="#000"/><rect x="54" y="583.6" width="4.4" height="1.1" fill="#000"/><path d="M111 567.9H126.1V579H114.4L111 582.6Z" fill="#fff" stroke="#000" stroke-width="2" stroke-linejoin="miter"/><path d="M113 572.3H124.2M116.1 570V577.6" stroke="#000" stroke-width="1.5" fill="none"/><rect x="121.4" y="574" width="2.8" height="3.6" fill="#000"/><path d="M113 575H115" stroke="#555" stroke-width="1" fill="none"/><path d="M188.6 566.7H179.2Q177.4 566.7 177.4 568.5V579.6" stroke="#000" stroke-width="2.1" fill="none"/><rect x="181.2" y="570.3" width="11.9" height="13.4" rx="1.7" fill="none" stroke="#000" stroke-width="2.1"/></svg>
</body>
</html>
